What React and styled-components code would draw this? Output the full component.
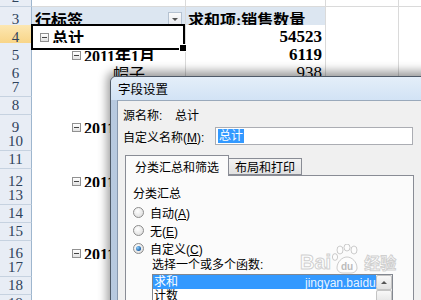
import React from "react";
import styled, { createGlobalStyle } from "styled-components";

const GlobalStyle = createGlobalStyle`
  * { box-sizing: border-box; }
  html, body { margin: 0; padding: 0; background: #fff; }
  body { font-family: "Liberation Serif", "Noto Sans CJK SC", serif; }
`;

const Screen = styled.div`
  position: relative;
  width: 421px;
  height: 300px;
  overflow: hidden;
  background: #fff;
`;

const Sheet = styled.div`
  margin-top: -11px;
  display: flex;
  flex-direction: column;
`;

const Row = styled.div`
  display: grid;
  grid-template-columns: 32px 154px 140px 73px 60px;
  height: 18px;
`;

const RowHead = styled.div`
  display: flex;
  align-items: center;
  justify-content: center;
  background: ${(p) => (p.$active ? "linear-gradient(#fce7b2, #f7cf7a)" : "#e8edf5")};
  border-right: 1px solid #9eb6ce;
  border-bottom: 1px solid #c6d2e0;
  color: #2f435c;
  font: 15px "Liberation Serif", serif;
`;

const Cell = styled.div`
  position: relative;
  display: flex;
  align-items: center;
  justify-content: ${(p) => (p.$right ? "flex-end" : "flex-start")};
  padding: 0 3px 0 ${(p) => p.$indent ?? 3}px;
  background: ${(p) => (p.$head ? "#dce6f1" : "#fff")};
  border-right: 1px solid #dadada;
  border-bottom: 1px solid ${(p) => (p.$noLine ? "#fff" : "#dadada")};
  font-family: "Liberation Serif", "Noto Sans CJK SC", serif;
  font-size: ${(p) => (p.$num ? 17 : 16)}px;
  font-weight: ${(p) => (p.$bold ? 700 : 400)};
  color: #000;
  white-space: nowrap;

  ${(p) =>
    p.$selected &&
    `
    &::after {
      content: "";
      position: absolute;
      inset: -1px 0 -1px -1px;
      border: 2px solid #000;
      z-index: 2;
    }
    &::before {
      content: "";
      position: absolute;
      right: -2px;
      bottom: -3px;
      width: 6px;
      height: 6px;
      background: #000;
      border: 1px solid #fff;
      z-index: 3;
    }
  `}
`;

const Toggle = styled.span`
  position: relative;
  flex: none;
  width: 9px;
  height: 9px;
  margin-right: 3px;
  border: 1px solid #919191;
  background: linear-gradient(#fff, #e2e2e2);

  &::after {
    content: "";
    position: absolute;
    left: 1px;
    right: 1px;
    top: 3px;
    height: 1px;
    background: #444;
  }
`;

const DropBtn = styled.span`
  margin-left: auto;
  width: 14px;
  height: 14px;
  border: 1px solid #b5c2d1;
  background: linear-gradient(#fbfbfb, #e6e9ee);
  display: flex;
  align-items: center;
  justify-content: center;

  &::after {
    content: "";
    border-left: 3px solid transparent;
    border-right: 3px solid transparent;
    border-top: 3px solid #555;
  }
`;

/* dialog */

const Dialog = styled.div`
  position: absolute;
  left: 110px;
  top: 76px;
  width: 330px;
  height: 240px;
  display: flex;
  flex-direction: column;
  border: 1px solid #4f5a68;
  border-radius: 6px 6px 0 0;
  background: #c8d8eb;
  box-shadow: 0 -2px 10px 3px rgba(0, 0, 0, 0.38);
  font: 12px "Liberation Sans", "Noto Sans CJK SC", sans-serif;
  color: #000;
  z-index: 5;
`;

const TitleBar = styled.div`
  height: 25px;
  padding-left: 7px;
  display: flex;
  align-items: center;
  border-radius: 5px 5px 0 0;
  background: linear-gradient(#e4eef9, #d2e3f5);
  font-size: 12.5px;
`;

const Frame = styled.div`
  flex: 1;
  display: flex;
  padding-left: 6px;
  background: linear-gradient(90deg, #b7c9df, #d6e2f0);
`;

const Content = styled.div`
  flex: 1;
  display: flex;
  flex-direction: column;
  padding: 3px 0 0 5px;
  background: #f0f0f0;
  border-left: 1px solid #8798ae;
  border-top: 1px solid #9aa9bb;
`;

const Line = styled.div`
  display: flex;
  align-items: center;
  height: ${(p) => p.$h || 20}px;
  white-space: nowrap;
`;

const Label = styled.span`
  width: ${(p) => p.$w || "auto"};
  flex: none;
`;

const Input = styled.div`
  width: 198px;
  height: 18px;
  display: flex;
  align-items: center;
  padding-left: 2px;
  background: #fff;
  border: 1px solid #abadb3;
`;

const Selected = styled.span`
  background: #3399ff;
  color: #fff;
  line-height: 14px;
  padding: 0 1px;
`;

const TabList = styled.div`
  display: flex;
  align-items: flex-end;
  height: 20px;
  margin: 7px 0 0 2px;
`;

const Tab = styled.div`
  height: ${(p) => (p.$active ? 21 : 17)}px;
  padding: 0 ${(p) => (p.$active ? 9 : 6)}px;
  display: flex;
  align-items: center;
  border: 1px solid #898c95;
  border-bottom: ${(p) => (p.$active ? "none" : "1px solid #898c95")};
  border-left: ${(p) => (p.$active ? "1px solid #898c95" : "none")};
  background: ${(p) => (p.$active ? "#fbfbfb" : "linear-gradient(#f3f3f3, #e1e1e1)")};
  margin-bottom: ${(p) => (p.$active ? -1 : 0)}px;
  position: relative;
  z-index: ${(p) => (p.$active ? 1 : 0)};
`;

const Panel = styled.div`
  width: 289px;
  margin-left: 2px;
  flex: 1;
  display: flex;
  flex-direction: column;
  padding: 7px 0 0 7px;
  background: #fbfbfb;
  border: 1px solid #898c95;
`;

const RadioRow = styled.label`
  display: flex;
  align-items: center;
  gap: 6px;
  height: 18px;
  margin-top: ${(p) => p.$gap || 0}px;
`;

const Radio = styled.span`
  flex: none;
  width: 11px;
  height: 11px;
  border-radius: 50%;
  border: 1px solid #8c8c8c;
  background: radial-gradient(circle at 40% 35%, #fff, #d8d8d8);
  display: flex;
  align-items: center;
  justify-content: center;

  &::after {
    content: "";
    display: ${(p) => (p.$checked ? "block" : "none")};
    width: 5px;
    height: 5px;
    border-radius: 50%;
    background: radial-gradient(circle at 35% 35%, #8dd0ff, #16589f 75%);
  }
`;

const Hint = styled.div`
  height: 14px;
  margin: -1px 0 0 19px;
  display: flex;
  align-items: center;
  white-space: nowrap;
`;

const ListBox = styled.div`
  display: flex;
  width: 241px;
  height: 40px;
  margin: 4px 0 0 19px;
  background: #fff;
  border: 1px solid #828790;
`;

const Items = styled.div`
  flex: 1;
  display: flex;
  flex-direction: column;
`;

const Item = styled.div`
  height: 14px;
  line-height: 14px;
  padding-left: 1px;
  background: ${(p) => (p.$selected ? "#3399ff" : "transparent")};
  color: ${(p) => (p.$selected ? "#fff" : "#000")};
`;

const ScrollBar = styled.div`
  width: 16px;
  display: flex;
  flex-direction: column;
  background: #f0f0f0;
`;

const ScrollBtn = styled.div`
  height: 15px;
  border: 1px solid #c4c4c4;
  border-radius: 2px;
  background: linear-gradient(#f8f8f8, #e2e2e2);
  display: flex;
  align-items: center;
  justify-content: center;

  &::after {
    content: "";
    border-left: 3px solid transparent;
    border-right: 3px solid transparent;
    border-bottom: 3px solid #555;
    display: ${(p) => (p.$arrow ? "block" : "none")};
  }
`;

/* watermark over the list */

const Watermark = styled.div`
  position: absolute;
  left: 300px;
  top: 244px;
  display: flex;
  align-items: flex-end;
  z-index: 6;
  font: bold 20px "Liberation Sans", "Noto Sans CJK SC", sans-serif;
  color: rgba(255, 255, 255, 0.55);
  -webkit-text-stroke: 1px rgba(170, 170, 170, 0.55);
  pointer-events: none;
`;

const WmCjk = styled.span`
  font-size: 16px;
  margin-left: 1px;
`;

const Url = styled.div`
  position: absolute;
  left: 305px;
  top: 276px;
  width: 72px;
  height: 14px;
  overflow: hidden;
  white-space: nowrap;
  z-index: 6;
  font: 12px/14px "Liberation Sans", sans-serif;
  color: rgba(255, 255, 255, 0.9);
`;

function Paw() {
  return (
    <svg width="32" height="30" viewBox="0 0 32 30">
      <g fill="rgba(255,255,255,0.55)" stroke="rgba(170,170,170,0.6)" strokeWidth="1">
        <ellipse cx="9" cy="6" rx="3" ry="4" />
        <ellipse cx="16" cy="3.5" rx="3" ry="3.5" />
        <ellipse cx="23" cy="6" rx="3" ry="4" />
        <ellipse cx="4" cy="13" rx="2.6" ry="3.4" />
        <path d="M6 24c0-6 5-11 10-11s10 5 10 11c0 3-3 5-6 5h-8c-3 0-6-2-6-5z" />
      </g>
      <text x="16" y="26" textAnchor="middle" fontFamily="Liberation Sans, sans-serif" fontWeight="bold" fontSize="10" fill="rgba(170,170,170,0.8)">du</text>
    </svg>
  );
}

const rows = [
  { n: 2 },
  { n: 3, head: true },
  { n: 4, active: true, a: "总计", aIndent: 8, toggle: true, b: "54523", bold: true },
  { n: 5, a: "2011年1月", aIndent: 40, toggle: true, b: "6119", bold: true },
  { n: 6, a: "帽子", aIndent: 81, b: "938" },
  { n: 7 },
  { n: 8 },
  { n: 9, a: "2011年2月", aIndent: 40, toggle: true, bold: true },
  { n: 10 },
  { n: 11 },
  { n: 12, a: "2011年3月", aIndent: 40, toggle: true, bold: true },
  { n: 13 },
  { n: 14 },
  { n: 15 },
  { n: 16, a: "2011年4月", aIndent: 40, toggle: true, bold: true },
  { n: 17 },
  { n: 18 },
  { n: 19 },
];

const radios = [
  { text: "自动", key: "A" },
  { text: "无", key: "E" },
  { text: "自定义", key: "C", checked: true },
];

export default function App() {
  return (
    <Screen>
      <GlobalStyle />
      <Sheet>
        {rows.map((r) =>
          r.head ? (
            <Row key={r.n}>
              <RowHead>{r.n}</RowHead>
              <Cell $head $bold $indent={3}>
                行标签
                <DropBtn />
              </Cell>
              <Cell $head $bold $indent={2}>求和项:销售数量</Cell>
              <Cell />
              <Cell />
            </Row>
          ) : (
            <Row key={r.n}>
              <RowHead $active={r.active}>{r.n}</RowHead>
              <Cell
                $indent={r.aIndent}
                $bold={r.bold}
                $selected={r.active}
                $noLine={r.n >= 4}
              >
                {r.toggle && <Toggle />}
                {r.a}
              </Cell>
              <Cell $right $num $bold={r.bold}>{r.b}</Cell>
              <Cell />
              <Cell />
            </Row>
          )
        )}
      </Sheet>

      <Dialog>
        <TitleBar>字段设置</TitleBar>
        <Frame>
          <Content>
            <Line>
              <Label $w="52px">源名称:</Label>
              总计
            </Line>
            <Line $h={24}>
              <Label $w="92px">
                自定义名称(<u>M</u>):
              </Label>
              <Input>
                <Selected>总计</Selected>
              </Input>
            </Line>
            <TabList>
              <Tab $active>分类汇总和筛选</Tab>
              <Tab>布局和打印</Tab>
            </TabList>
            <Panel>
              <Line $h={18}>分类汇总</Line>
              {radios.map((r, i) => (
                <RadioRow key={r.key} $gap={i === 0 ? 2 : 0}>
                  <Radio $checked={r.checked} />
                  <span>
                    {r.text}(<u>{r.key}</u>)
                  </span>
                </RadioRow>
              ))}
              <Hint>选择一个或多个函数:</Hint>
              <ListBox>
                <Items>
                  <Item $selected>求和</Item>
                  <Item>计数</Item>
                </Items>
                <ScrollBar>
                  <ScrollBtn $arrow />
                  <ScrollBtn />
                </ScrollBar>
              </ListBox>
            </Panel>
          </Content>
        </Frame>
      </Dialog>

      <Watermark>
        Bai
        <Paw />
        <WmCjk>经验</WmCjk>
      </Watermark>
      <Url>jingyan.baidu.com</Url>
    </Screen>
  );
}
